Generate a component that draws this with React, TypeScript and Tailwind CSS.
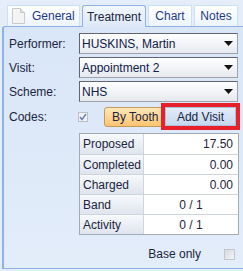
import React from "react";

interface Row {
    label: string;
    value: string;
    center?: boolean;
}

const rows: Row[] = [
    { label: "Proposed", value: "17.50" },
    { label: "Completed", value: "0.00" },
    { label: "Charged", value: "0.00" },
    { label: "Band", value: "0 / 1", center: true },
    { label: "Activity", value: "0 / 1", center: true },
];

const Caret = () => (
    <svg width="9" height="5" viewBox="0 0 9 5" className="shrink-0">
        <path d="M0 0h9L4.5 5z" fill="#111" />
    </svg>
);

const Combo = ({ text }: { text: string }) => (
    <div className="flex items-center w-[159px] h-[21px] border border-[#9da3aa] border-t-[#5f6670] border-l-[#5f6670] bg-gradient-to-b from-white to-[#e6e9ee] pl-[2px] pr-[4px]">
        <span className="flex-1 text-[12px] text-[#10204a] leading-none truncate">{text}</span>
        <Caret />
    </div>
);

const PageIcon = () => (
    <svg width="15" height="16" viewBox="0 0 15 16">
        <path d="M1.5 0.5h8l4 4v11h-12z" fill="#f4f4f4" stroke="#c9c9c9" />
        <path d="M9.5 0.5v4h4" fill="#e2e2e2" stroke="#c9c9c9" />
    </svg>
);

const App: React.FC = () => {
    return (
        <div className="w-[243px] h-[271px] bg-[#e4edf9] overflow-hidden font-['Liberation_Sans',Arial,sans-serif] text-[#1b2440]">
            {/* tab strip */}
            <div className="flex items-end h-[26px] pl-[7px] pt-[4px] gap-[2px]">
                <div className="flex items-center gap-[6px] h-[21px] w-[73px] pl-[3px] border border-b-0 border-[#c7e3f5] bg-gradient-to-b from-white to-[#eef4fc]">
                    <PageIcon />
                    <span className="text-[12px] text-[#1d3a8a]">General</span>
                </div>
                <div className="relative z-10 flex items-center justify-center h-[22px] w-[64px] mb-[-1px] border border-b-0 border-[#8db2e3] rounded-t-[3px] bg-gradient-to-b from-[#f2f7fd] to-[#dde8f7]">
                    <span className="text-[12px] text-[#1b2440]">Treatment</span>
                </div>
                <div className="flex items-center justify-center h-[21px] w-[44px] border border-b-0 border-[#c7e3f5] bg-gradient-to-b from-white to-[#eef4fc]">
                    <span className="text-[12px] text-[#1d3a8a]">Chart</span>
                </div>
                <div className="flex items-center justify-center h-[21px] w-[44px] border border-b-0 border-[#c7e3f5] bg-gradient-to-b from-white to-[#eef4fc]">
                    <span className="text-[12px] text-[#1d3a8a]">Notes</span>
                </div>
            </div>

            {/* panel */}
            <div className="ml-[2px] w-[241px] h-[243px] border border-r-0 border-[#8db2e3] border-l-2 rounded-tl-[3px] bg-gradient-to-b from-[#d9e6f7] to-[#e3edfa] pt-[6px]">
                <div className="flex flex-col gap-[3px]">
                    <div className="flex items-center">
                        <span className="w-[75px] pl-[5px] text-[12px]">Performer:</span>
                        <Combo text="HUSKINS, Martin" />
                    </div>
                    <div className="flex items-center">
                        <span className="w-[75px] pl-[5px] text-[12px]">Visit:</span>
                        <Combo text="Appointment 2" />
                    </div>
                    <div className="flex items-center">
                        <span className="w-[75px] pl-[5px] text-[12px]">Scheme:</span>
                        <Combo text="NHS" />
                    </div>
                </div>

                <div className="flex items-center h-[27px] mt-[1px]">
                    <span className="w-[74px] pl-[5px] text-[12px]">Codes:</span>
                    <div className="flex items-center justify-center w-[10px] h-[10px] border border-[#b9c0c8] bg-[#f1f3f6]">
                        <svg width="8" height="8" viewBox="0 0 8 8">
                            <path d="M1 4l2 2.5L7 1" stroke="#6b7db5" strokeWidth="1.4" fill="none" />
                        </svg>
                    </div>
                    <div className="ml-[16px] flex items-center h-[20px] w-[60px] pl-[7px] border border-[#c29a5d] rounded-l-[3px] bg-gradient-to-b from-[#fde7b6] to-[#fbc46f] text-[12px] text-[#1b2440] whitespace-nowrap overflow-hidden">
                        By Tooth
                    </div>
                    <div className="ml-[-3px] h-[27px] w-[79px] border-4 border-[#e8202a] bg-[#c7d9f0]">
                        <div className="flex items-center justify-center h-full border border-[#aebfd8] bg-gradient-to-b from-[#e2ecf9] to-[#c6d8ef] text-[12px] text-[#1b2440]">
                            Add Visit
                        </div>
                    </div>
                </div>

                <div className="ml-[75px] mt-[3px] w-[160px] border border-[#a3aab3] bg-white">
                    {rows.map((row, i) => (
                        <div key={row.label} className={`flex h-[20px] ${i > 0 ? "border-t border-[#cfd5dc]" : ""}`}>
                            <div className="w-[64px] pl-[3px] flex items-center border-r border-[#cfd5dc] bg-gradient-to-b from-[#f7f9fc] to-[#dfe5ee] text-[12px] text-[#1b2440]">
                                {row.label}
                            </div>
                            <div className={`flex-1 flex items-center text-[12px] text-[#1b2440] ${row.center ? "justify-center" : "justify-end pr-[5px]"}`}>
                                {row.value}
                            </div>
                        </div>
                    ))}
                </div>

                <div className="flex items-center justify-end mt-[10px] pr-[8px]">
                    <span className="text-[12px] text-[#1b2440]">Base only</span>
                    <div className="ml-[23px] w-[11px] h-[11px] border border-[#c3c8ce] bg-gradient-to-br from-[#d6d9dd] to-[#f4f5f7]" />
                </div>
            </div>
        </div>
    );
};

export default App;
